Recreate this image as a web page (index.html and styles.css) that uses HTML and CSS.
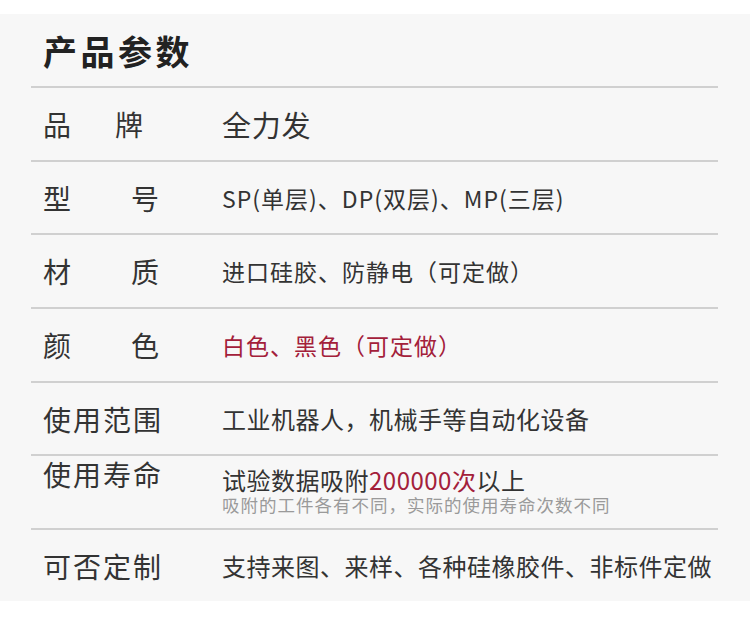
FILE: index.html
```html
<!DOCTYPE html>
<html lang="zh">
<head>
<meta charset="utf-8">
<link rel="stylesheet" href="styles.css">
</head>
<body>
<div class="panel">
  <h1 class="title">产品参数</h1>
  <div class="row">
    <div class="label pair narrow"><span>品</span><span>牌</span></div>
    <div class="value big">全力发</div>
  </div>
  <div class="row">
    <div class="label pair"><span>型</span><span>号</span></div>
    <div class="value">SP(单层)、DP(双层)、MP(三层)</div>
  </div>
  <div class="row">
    <div class="label pair"><span>材</span><span>质</span></div>
    <div class="value">进口硅胶、防静电（可定做）</div>
  </div>
  <div class="row">
    <div class="label pair"><span>颜</span><span>色</span></div>
    <div class="value red">白色、黑色（可定做）</div>
  </div>
  <div class="row">
    <div class="label wide">使用范围</div>
    <div class="value lg">工业机器人，机械手等自动化设备</div>
  </div>
  <div class="row top">
    <div class="label wide">使用寿命</div>
    <div class="value lg">
      <div class="line1">试验数据吸附<span class="red">200000次</span>以上</div>
      <div class="sub">吸附的工件各有不同，实际的使用寿命次数不同</div>
    </div>
  </div>
  <div class="row">
    <div class="label wide">可否定制</div>
    <div class="value lg">支持来图、来样、各种硅橡胶件、非标件定做</div>
  </div>
</div>
</body>
</html>
```
FILE: styles.css
```css
html, body {
  margin: 0;
  padding: 0;
  background: #ffffff;
}
body {
  font-family: "Noto Sans CJK SC", "Noto Sans", sans-serif;
  color: #333333;
}
.panel {
  margin-top: 14px;
  height: 587px;
  background: #f7f7f7;
  padding: 0 32px 0 31px;
  box-sizing: border-box;
}
.title {
  margin: 0;
  height: 72px;
  display: flex;
  align-items: center;
  padding-left: 12px;
  font-size: 34px;
  font-weight: 700;
  letter-spacing: 3.5px;
  color: #222222;
}
.row {
  height: 71.7px;
  border-top: 2px solid #d0d0d0;
  display: flex;
  align-items: center;
  padding-left: 12px;
}
.row.top {
  align-items: flex-start;
}
.label {
  width: 179px;
  flex: none;
  font-size: 28px;
  line-height: 36px;
}
.label.pair {
  display: flex;
  justify-content: space-between;
  width: 116px;
  margin-right: 63px;
}
.label.pair.narrow {
  width: 100px;
  margin-right: 79px;
}
.label.wide {
  letter-spacing: 2px;
}
.value {
  font-size: 23px;
  line-height: 32px;
  letter-spacing: 1px;
  color: #333333;
}
.value.big {
  font-size: 29px;
  letter-spacing: 0.7px;
}
.value.lg {
  font-size: 24px;
  letter-spacing: 0.5px;
}
.red {
  color: #a3203a;
}
.row.top .label {
  margin-top: 0;
}
.row.top .value {
  margin-top: 11px;
}
.line1 {
  line-height: 26px;
}
.sub {
  font-size: 17.5px;
  line-height: 24px;
  letter-spacing: 1px;
  color: #9a9a9a;
}
```
